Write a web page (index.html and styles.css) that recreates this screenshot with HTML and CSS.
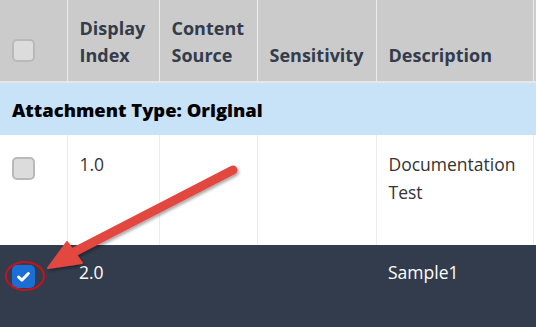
FILE: index.html
```html
<!DOCTYPE html>
<html lang="en">
	<head>
		<meta charset="UTF-8">
		<title>Attachments</title>
		<link rel="stylesheet" href="styles.css">
	</head>
	<body>
		<div class="grid-wrap">
			<table class="grid">
				<colgroup>
					<col class="c-check">
					<col class="c-index">
					<col class="c-source">
					<col class="c-sens">
					<col class="c-desc">
					<col class="c-more">
				</colgroup>
				<thead>
					<tr>
						<th><span class="box"></span></th>
						<th>Display<br>Index</th>
						<th>Content<br>Source</th>
						<th>Sensitivity</th>
						<th>Description</th>
						<th></th>
					</tr>
				</thead>
				<tbody>
					<tr class="group">
						<td colspan="6">Attachment Type: Original</td>
					</tr>
					<tr class="row">
						<td><span class="box"></span></td>
						<td>1.0</td>
						<td></td>
						<td></td>
						<td>Documentation<br>Test</td>
						<td></td>
					</tr>
					<tr class="row selected">
						<td><span class="box checked">
							<svg viewBox="0 0 16 16" width="15" height="15"><path d="M2.8 8.6 L6.4 11.8 L13.2 4.8" fill="none" stroke="#fff" stroke-width="3.2" stroke-linecap="round" stroke-linejoin="round"/></svg>
						</span></td>
						<td>2.0</td>
						<td></td>
						<td></td>
						<td>Sample1</td>
						<td></td>
					</tr>
				</tbody>
			</table>

			<!-- annotation drawn over the grid -->
			<svg class="callout" width="536" height="327" viewBox="0 0 536 327">
				<defs>
					<filter id="shade" x="-20%" y="-20%" width="140%" height="140%">
						<feDropShadow dx="1.5" dy="2" stdDeviation="1.5" flood-color="#000" flood-opacity="0.35"/>
					</filter>
				</defs>
				<g filter="url(#shade)" fill="#e2463f" stroke="#e2463f">
					<line x1="233" y1="170" x2="74" y2="252" stroke-width="9" stroke-linecap="round"/>
					<polygon points="67,242 48,268 82,263" stroke-width="2" stroke-linejoin="round"/>
				</g>
				<ellipse cx="25" cy="276" rx="19" ry="14" fill="none" stroke="#c4121f" stroke-width="2"/>
			</svg>
		</div>
	</body>
</html>
```

FILE: styles.css
```css
* {
	box-sizing: border-box;
}

body {
	margin:      0;
	overflow:    hidden;
	background:  #fff;
	font-family: "Open Sans", "Liberation Sans", sans-serif;
}

.grid-wrap {
	position: relative;
	width:    536px;
	height:   327px;
	overflow: hidden;
}

.grid {
	border-collapse: collapse;
	table-layout:    fixed;
	width:           600px;
}

.c-check  { width: 67px; }
.c-index  { width: 92px; }
.c-source { width: 98px; }
.c-sens   { width: 119px; }
.c-desc   { width: 157px; }
.c-more   { width: 67px; }

th {
	height:         82px;
	padding:        0 0 12px 12px;
	background:     #cbcbcb;
	border-left:    1px solid #ececec;
	border-bottom:  2px solid #e6e6e6;
	color:          #333c4a;
	font-size:      18px;
	font-weight:    700;
	line-height:    27px;
	text-align:     left;
	vertical-align: bottom;
	white-space:    nowrap;
}

th:first-child {
	border-left: none;
	padding:     0 0 19px 12px;
}

.group td {
	height:      53px;
	padding:     0 12px;
	background:  #c8e2f8;
	color:       #000;
	font-size:   18.4px;
	font-weight: 800;
}

.row td {
	padding:        15px 12px 0 12px;
	border-left:    1px solid #ececec;
	color:          #333;
	font-size:      17.5px;
	line-height:    28px;
	vertical-align: top;
}

.row td:first-child {
	border-left: none;
	padding-top: 22px;
}

.row:nth-child(2) td {
	height: 110px;
}

.selected td {
	height:      90px;
	padding-top: 13px;
	background:  #323c4c;
	border-left: none;
	color:       #fff;
}

.selected td:first-child {
	padding-top: 20px;
}

.box {
	display:       block;
	width:         23px;
	height:        23px;
	border:        2px solid #b9b9b9;
	border-radius: 5px;
	background:    #dcdcdc;
}

.box.checked {
	display:         flex;
	align-items:     center;
	justify-content: center;
	border:          none;
	background:      #1b6fd4;
}

.callout {
	position:       absolute;
	top:            0;
	left:           0;
	pointer-events: none;
}
```
